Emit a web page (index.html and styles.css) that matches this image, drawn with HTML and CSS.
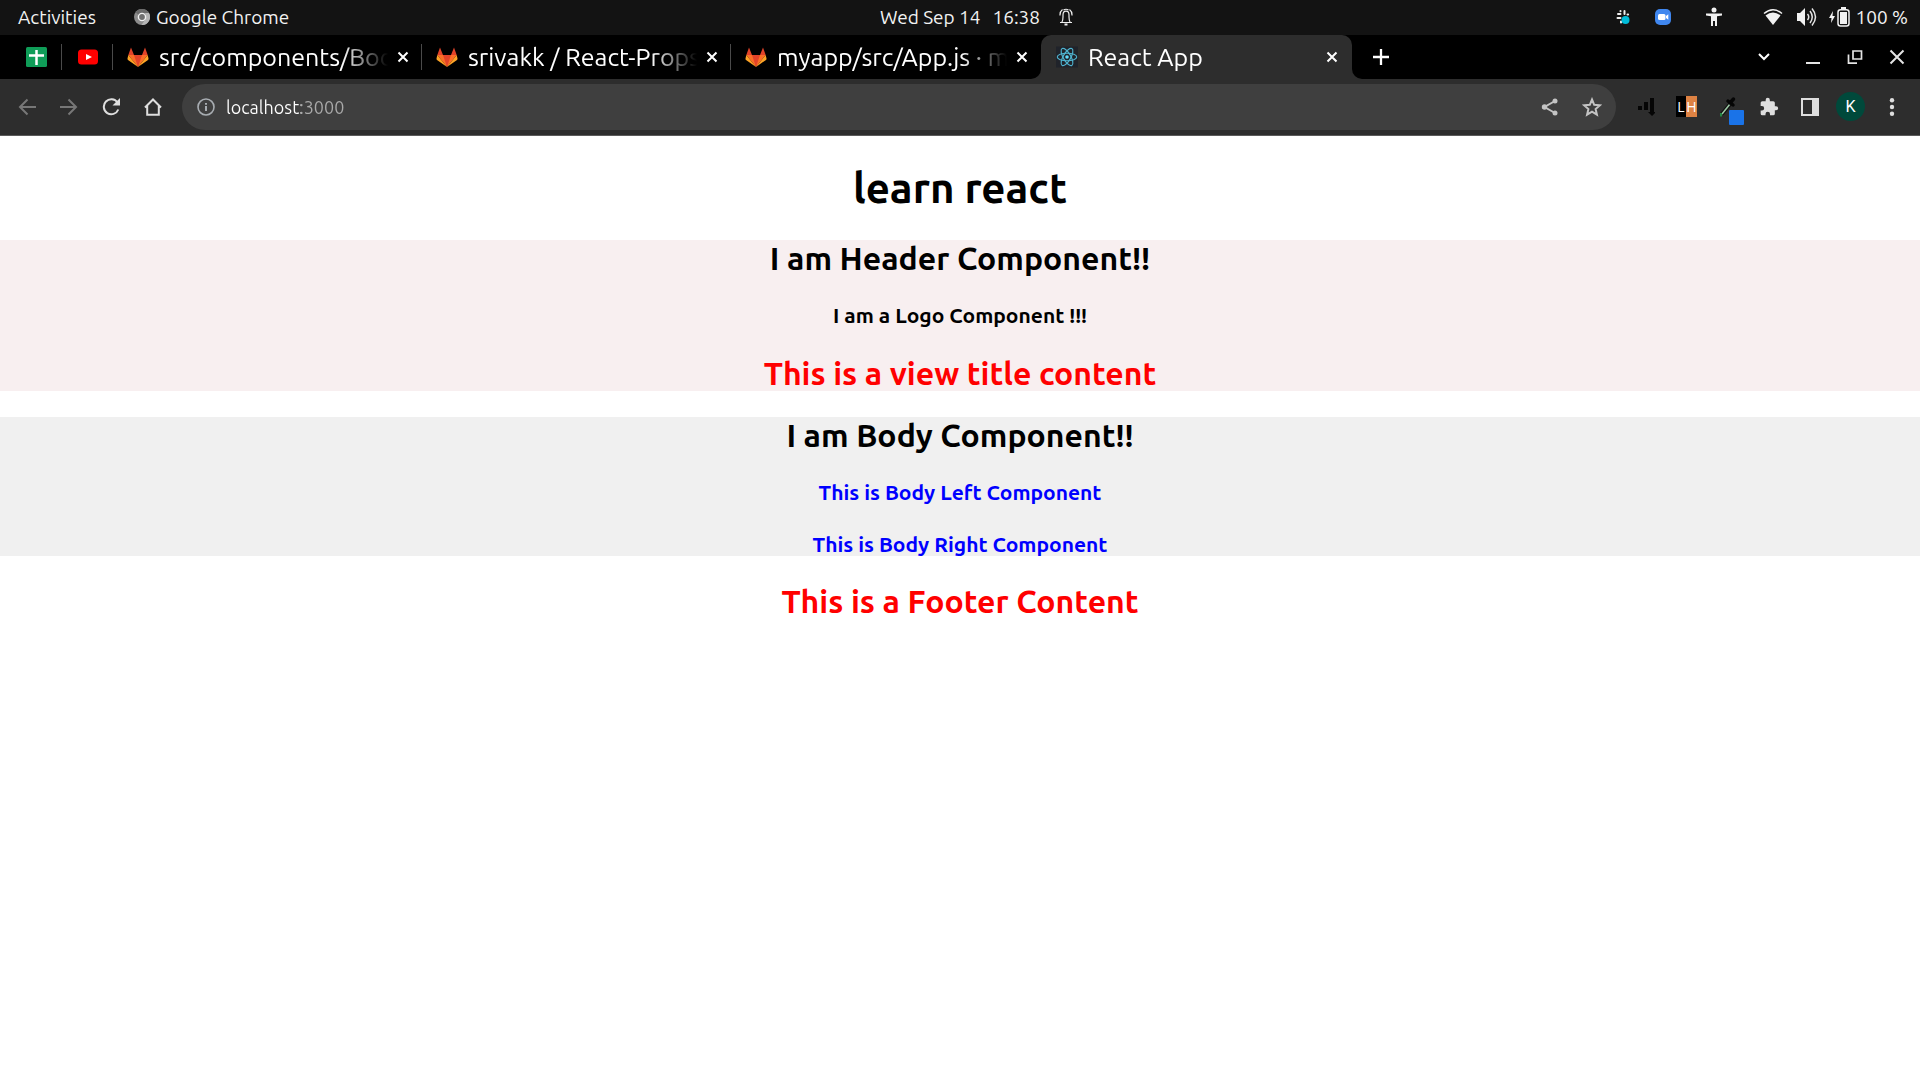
FILE: index.html
```html
<!DOCTYPE html>
<html lang="en">
<head>
<meta charset="utf-8">
<title>React App</title>
<link rel="stylesheet" href="styles.css">
</head>
<body>
<svg class="defs" aria-hidden="true">
  <symbol id="fox" viewBox="0 0 22 22">
    <path fill="#e24329" d="M11 21 4 9h14z"/>
    <path fill="#e24329" d="M4 1.500 1.300 9H7zM18 1.500 20.700 9H15z"/>
    <path fill="#fc6d26" d="M11 21 7 9H1.300zM11 21 15 9h5.700z"/>
    <path fill="#fca326" d="M1.300 9 .5 12.500q-.2.900.5 1.400L11 21zM20.700 9l.8 3.500q.2.900-.5 1.400L11 21z"/>
  </symbol>
  <symbol id="cross" viewBox="0 0 12 12"><path d="m1.500 1.500 9 9m0-9-9 9" fill="none" stroke="currentColor" stroke-width="2"/></symbol>
</svg>

<header class="system-bar">
  <div class="system-left">
    <button class="activities">Activities</button>
    <button class="app-menu">
      <svg width="16" height="16" viewBox="0 0 16 16"><circle cx="8" cy="8" r="8" fill="#8c8c8c"/><path d="M8 0a8 8 0 0 1 7 4H8a4 4 0 0 0-3.500 2L1.500 3.300A8 8 0 0 1 8 0z" fill="#6c6c6c"/><path d="M15 4a8 8 0 0 1-7.500 12l4-6Q13 7 11 4z" fill="#b5b5b5"/><circle cx="8" cy="8" r="4.300" fill="#f2f2f2"/><circle cx="8" cy="8" r="2.900" fill="#707070"/></svg>
      Google Chrome
    </button>
  </div>
  <button class="clock">
    <span>Wed Sep 14</span><span>16:38</span>
    <svg width="14" height="18" viewBox="0 0 14 18" fill="none" stroke="#eee" stroke-width="1.200"><path d="M1 14.500h12M2.800 14.500Q4 12.500 4 9V7q0-3.800 3-3.800T10 7v2q0 3.500 1.200 5.500M1 7.500Q.8 3.500 3.500 1.500M13 7.500Q13.200 3.500 10.500 1.500M4.500 2Q7 .5 9.500 2"/><path d="M5.500 16.500h3" stroke-width="2"/></svg>
  </button>
  <div class="system-right">
    <svg class="slack" width="16" height="16" viewBox="0 0 16 16" fill="none" stroke="#eee" stroke-width="2" stroke-linecap="round"><path d="M5.500 2v.2M5.500 5H3M9.500 2v3M12.500 5.500h.6M2.500 9h3M6 12.500v1"/><circle cx="10.500" cy="11" r="4" fill="#00bcd9" stroke="none"/></svg>
    <svg class="zoom" width="16" height="16" viewBox="0 0 16 16"><rect width="16" height="16" rx="5" fill="#4087ef"/><rect x="3" y="5" width="7.500" height="6" rx="1.500" fill="#fff"/><path d="m11 7 2.300-1.700v5.400L11 9z" fill="#fff"/></svg>
    <svg class="access" width="16" height="20" viewBox="0 0 16 20" fill="#f2f2f2"><circle cx="8" cy="3" r="2.500"/><path d="M0 6.500h16v2l-5 .8v9.700H9v-5H7v5H5V9.300l-5-.8z"/></svg>
    <svg class="wifi" width="20" height="18" viewBox="0 0 20 18"><path d="M1 5.500Q10-2 19 5.500" fill="none" stroke="#f2f2f2" stroke-width="1.500"/><path d="M2.500 7.500Q10 1.500 17.500 7.500L10 17z" fill="#f2f2f2"/></svg>
    <svg class="volume" width="20" height="20" viewBox="0 0 20 20"><path d="M0 6h3l5-5v18l-5-5H0z" fill="#f2f2f2"/><path d="M10.500 7q2.500 3 0 6M13 4q4.500 6 0 12M15 1.500q7 8.500 0 17" fill="none" stroke="#e2e2e2" stroke-width="1.500"/></svg>
    <svg class="battery" width="21" height="20" viewBox="0 0 21 20"><path d="M4 4 0 11h2.500L2 16l4-7H3.500z" fill="#f2f2f2"/><rect x="9" y="2.700" width="11" height="16.300" rx="2.500" fill="none" stroke="#f2f2f2" stroke-width="1.500"/><path d="M11 5h7v12h-7zM12 0h5v2h-5z" fill="#f2f2f2"/></svg>
    <span>100 %</span>
  </div>
</header>

<nav class="tab-strip" aria-label="Tabs">
  <a class="pin" href="#sheets" aria-label="Sheets"><svg width="21" height="20" viewBox="0 0 21 20"><rect width="21" height="20" rx="1.500" fill="#0f9d58"/><path d="M10.500 3v15M3 8.500h15" stroke="#fff" stroke-width="2.500"/></svg></a>
  <a class="pin" href="#video" aria-label="YouTube"><svg width="20" height="16" viewBox="0 0 20 16"><rect y=".5" width="20" height="15" rx="3.500" fill="#f00"/><path d="m8 5 6 3-6 3z" fill="#fff"/></svg></a>
  <div class="tab"><svg class="favicon"><use href="#fox"/></svg><a href="#body">src/components/Bod</a><button aria-label="Close tab"><svg><use href="#cross"/></svg></button></div>
  <div class="tab"><svg class="favicon"><use href="#fox"/></svg><a href="#props">srivakk / React-Props</a><button aria-label="Close tab"><svg><use href="#cross"/></svg></button></div>
  <div class="tab last"><svg class="favicon"><use href="#fox"/></svg><a href="#app">myapp/src/App.js · m</a><button aria-label="Close tab"><svg><use href="#cross"/></svg></button></div>
  <div class="active-slot">
    <div class="tab active"><svg class="favicon" viewBox="0 0 21 20"><rect width="21" height="20" fill="#20232a"/><g fill="none" stroke="#4fb3cf" stroke-width="1.100"><ellipse cx="10.500" cy="10" rx="9.300" ry="3.600"/><ellipse cx="10.500" cy="10" rx="9.300" ry="3.600" transform="rotate(60 10.500 10)"/><ellipse cx="10.500" cy="10" rx="9.300" ry="3.600" transform="rotate(120 10.500 10)"/></g><circle cx="10.500" cy="10" r="1.700" fill="#61dafb"/></svg><a href="#react">React App</a><button aria-label="Close tab"><svg><use href="#cross"/></svg></button></div>
  </div>
  <div class="strip-rest">
    <button aria-label="New tab"><svg width="16" height="16" viewBox="0 0 16 16"><path d="M8 0v16M0 8h16" stroke="#fff" stroke-width="2.300"/></svg></button>
    <div class="window-controls">
      <button aria-label="Search tabs"><svg width="14" height="10" viewBox="0 0 14 10"><path d="m2 2 5 5 5-5" fill="none" stroke="#fff" stroke-width="2"/></svg></button>
      <button aria-label="Minimize"><svg width="16" height="16" viewBox="0 0 16 16"><path d="M1 14h14" stroke="#e4e4e4" stroke-width="2"/></svg></button>
      <button aria-label="Restore"><svg width="16" height="16" viewBox="0 0 16 16"><path d="M6 2h8.500v8H6zM1.500 5.500v8.700H10" fill="none" stroke="#e4e4e4" stroke-width="1.700"/></svg></button>
      <button aria-label="Close window"><svg width="16" height="16" viewBox="0 0 16 16"><path d="m1.500 1.500 13 13m0-13-13 13" stroke="#e4e4e4" stroke-width="2"/></svg></button>
    </div>
  </div>
</nav>

<div class="toolbar">
  <button class="tool dim" aria-label="Back"><svg width="18" height="18" viewBox="0 0 18 18"><path d="M18 9H2m7.500-7.500L2 9l7.500 7.500"/></svg></button>
  <button class="tool dim" aria-label="Forward"><svg width="18" height="18" viewBox="0 0 18 18"><path d="M0 9h16M8.500 1.500 16 9l-7.500 7.500"/></svg></button>
  <button class="tool" aria-label="Reload"><svg width="18" height="18" viewBox="0 0 18 18"><path d="M15.500 4.500A7.500 7.500 0 1 0 16.300 11.500"/><path d="M18 0v7.500h-7.500z" class="solid"/></svg></button>
  <button class="tool" aria-label="Home"><svg width="18" height="18" viewBox="0 0 18 18"><path d="M1 9.500 9 1.500l8 8M3.200 8v8.800h11.600V8"/></svg></button>
  <div class="omnibox">
    <svg width="18" height="18" viewBox="0 0 18 18" fill="none" stroke="#a8adb2" stroke-width="1.600"><circle cx="9" cy="9" r="8"/><path d="M9 8v5M9 5v1.800" stroke-width="2"/></svg>
    <input class="address" type="text" value="localhost:3000" aria-label="Address" spellcheck="false">
    <button class="tool soft" aria-label="Share"><svg width="18" height="18" viewBox="0 0 18 18"><path d="M14 3 3.500 9 14 15"/><g class="solid"><circle cx="14" cy="3" r="2.500"/><circle cx="3.500" cy="9" r="2.700"/><circle cx="14" cy="15" r="2.500"/></g></svg></button>
    <button class="tool soft" aria-label="Bookmark"><svg width="20" height="20" viewBox="0 0 20 20"><path d="m10 2.500 2.200 5.300 5.700.5-4.300 3.700 1.300 5.600-4.900-3-4.900 3L6.400 12 2.100 8.300l5.700-.5z"/></svg></button>
  </div>
  <button class="tool ext" aria-label="Analytics extension"><svg width="18" height="20" viewBox="0 0 18 20"><path d="M1 9h4v4H1zM7 5h4v8H7zM13 1h4v14h2l-4 4-4-4h2z" fill="#050505" stroke="none"/></svg></button>
  <button class="tool ext lh" aria-label="LH extension"><span>L</span><span>H</span></button>
  <button class="tool ext" aria-label="Color picker"><svg width="32" height="36" viewBox="0 0 32 36"><path d="m10 25 9-11" stroke="#111" stroke-width="4"/><path d="m10 25 8-10" stroke="#9dc9a5" stroke-width="1.500"/><path d="M9 24v3.500" stroke="#258a45"/><path d="m16 12 5 4M18 14l3.500-4" stroke="#050505" stroke-width="3.500" stroke-linecap="round"/><rect x="17" y="21" width="15" height="15" rx="1" fill="#1a73e8" stroke="none"/></svg></button>
  <button class="tool ext" aria-label="Extensions"><svg width="20" height="20" viewBox="0 0 24 24"><path class="solid" d="M20.500 11H19V7a2 2 0 0 0-2-2h-4V3.500a2.500 2.500 0 0 0-5 0V5H4a2 2 0 0 0-2 2v3.800h1.500a2.700 2.700 0 0 1 0 5.400H2V20a2 2 0 0 0 2 2h3.800v-1.500a2.700 2.700 0 0 1 5.400 0V22H17a2 2 0 0 0 2-2v-4h1.500a2.500 2.500 0 0 0 0-5z"/></svg></button>
  <button class="tool ext" aria-label="Side panel"><svg width="18" height="18" viewBox="0 0 18 18"><path d="M1 1h16v16H1z"/><path class="solid" d="M11 0h7v18h-7z"/></svg></button>
  <button class="tool ext" aria-label="Profile"><span class="avatar">K</span></button>
  <button class="tool ext" aria-label="Menu"><svg width="18" height="18" viewBox="0 0 18 18"><g class="solid"><circle cx="9" cy="2.200" r="2.200"/><circle cx="9" cy="9" r="2.200"/><circle cx="9" cy="15.800" r="2.200"/></g></svg></button>
</div>

<main class="page">
  <h1>learn react</h1>
  <section class="page-header">
    <h2>I am Header Component!!</h2>
    <h4>I am a Logo Component !!!</h4>
    <h2 class="red">This is a view title content</h2>
  </section>
  <section class="page-body">
    <h2>I am Body Component!!</h2>
    <h4 class="blue">This is Body Left Component</h4>
    <h4 class="blue">This is Body Right Component</h4>
  </section>
  <h2 class="page-footer red">This is a Footer Content</h2>
</main>
</body>
</html>
```
FILE: styles.css
```css
* { box-sizing: border-box; }
body {
  margin: 0;
  background: #fff;
  font-family: Ubuntu, "Noto Sans", sans-serif;
}
button {
  display: flex;
  align-items: center;
  justify-content: center;
  padding: 0;
  border: 0;
  background: none;
  color: inherit;
  font: inherit;
}
svg { display: block; flex: none; }
.defs { width: 0; height: 0; position: absolute; }

/* Desktop bar */
.system-bar {
  display: grid;
  grid-template-columns: 1fr auto 1fr;
  align-items: center;
  height: 35px;
  padding-bottom: 2px;
  background: #131313;
  color: #f2f2f2;
  font-size: 19px;
}
.system-left { display: flex; gap: 38px; padding-left: 18px; }
.app-menu { gap: 6px; }
.clock { gap: 12px; padding-left: 33px; }
.clock svg { margin-left: 7px; }
.system-right { display: flex; align-items: center; justify-content: flex-end; padding-right: 12px; }
.zoom { margin-left: 24px; }
.access { margin-left: 35px; }
.wifi { margin-left: 41px; }
.volume { margin-left: 14px; }
.battery { margin: 0 6px 0 12px; }

/* Tabs */
.tab-strip {
  display: flex;
  height: 44px;
  background: #2d2d2d;
  color: #fff;
}
.pin, .tab {
  display: flex;
  align-items: center;
  background: linear-gradient(#4a4a4a, #4a4a4a) right center / 1px 26px no-repeat #000;
}
.pin { justify-content: center; width: 51px; }
.pin:first-child { width: 62px; padding-left: 11px; }
.tab { flex: 0 1 309px; min-width: 0; padding: 0 13px 0 14px; }
.tab .favicon { width: 22px; height: 22px; }
.tab a {
  flex: 1;
  min-width: 0;
  margin: 0 9px 0 10px;
  overflow: hidden;
  color: #fff;
  font-size: 25px;
  line-height: 34px;
  text-decoration: none;
  white-space: nowrap;
  -webkit-mask-image: linear-gradient(90deg, #000 calc(100% - 46px), transparent);
  mask-image: linear-gradient(90deg, #000 calc(100% - 46px), transparent);
}
.tab button svg { width: 12px; height: 12px; }
.tab.last { flex-basis: 310px; background: #000; border-bottom-right-radius: 10px; }
.active-slot { display: flex; flex: 0 1 311px; min-width: 0; background: linear-gradient(#000 50%, #2d2d2d 50%); }
.tab.active {
  flex: 1;
  padding: 0 14px 0 15px;
  background: #2d2d2d;
  border-radius: 10px 10px 0 0;
}
.strip-rest {
  flex: 1;
  display: flex;
  justify-content: space-between;
  padding: 0 8px 0 21px;
  background: #000;
  border-bottom-left-radius: 10px;
}
.window-controls { display: flex; }
.window-controls button { width: 42px; }
.window-controls button:first-child { margin-right: 7px; }
.window-controls button:last-child { width: 30px; margin-left: 6px; }

/* Toolbar */
.toolbar {
  display: flex;
  align-items: center;
  height: 57px;
  padding: 0 8px 1px 6px;
  background: #2d2d2d;
  border-bottom: 1px solid #5a5a5a;
}
.tool { flex: none; width: 42px; height: 42px; color: #dedede; }
.tool.ext { width: 41px; }
.tool svg { fill: none; stroke: currentColor; stroke-width: 2; }
.tool .solid { fill: currentColor; stroke: none; }
.tool.dim { color: #777; }
.tool.soft { color: #c4c4c4; }
.omnibox {
  flex: 1;
  display: flex;
  align-items: center;
  height: 46px;
  margin: 0 9px 0 8px;
  padding: 0 3px 0 15px;
  border-radius: 23px;
  background: #3f3f3f;
}
.address {
  flex: 1;
  min-width: 0;
  margin: 0 11px;
  padding: 0;
  border: 0;
  outline: 0;
  font: 18px/26px Ubuntu, "Noto Sans", sans-serif;
  color: transparent;
  background: linear-gradient(90deg, #fff 75px, #aaa 75px);
  -webkit-background-clip: text;
  background-clip: text;
}
.tool.lh { color: #fff; font: 14px/21px "Open Sans", sans-serif; }
.lh span { width: 10px; background: #000; }
.lh span + span { width: 11px; background: #de8243; }
.avatar {
  width: 29px;
  border-radius: 50%;
  background: #00493b;
  color: #fff;
  font: 16px/29px Roboto, sans-serif;
}

/* Rendered app */
.page { text-align: center; color: #000; }
.page h1 { margin: 28px 0; font-size: 42px; line-height: 48px; }
.page h2 { margin: 0; font-size: 32px; line-height: 36px; }
.page h4 { margin: 27px 0 28px; font-size: 21px; line-height: 24px; }
.page h4:last-child { margin-bottom: 0; }
.page-header, .page-body { margin-bottom: 26px; }
.page-header { background: #f8eff0; }
.page-body { background: #f0f0f0; }
.page .page-footer { margin-top: 27px; }
.page .red { color: #f00; }
.page .blue { color: #00f; }
```
